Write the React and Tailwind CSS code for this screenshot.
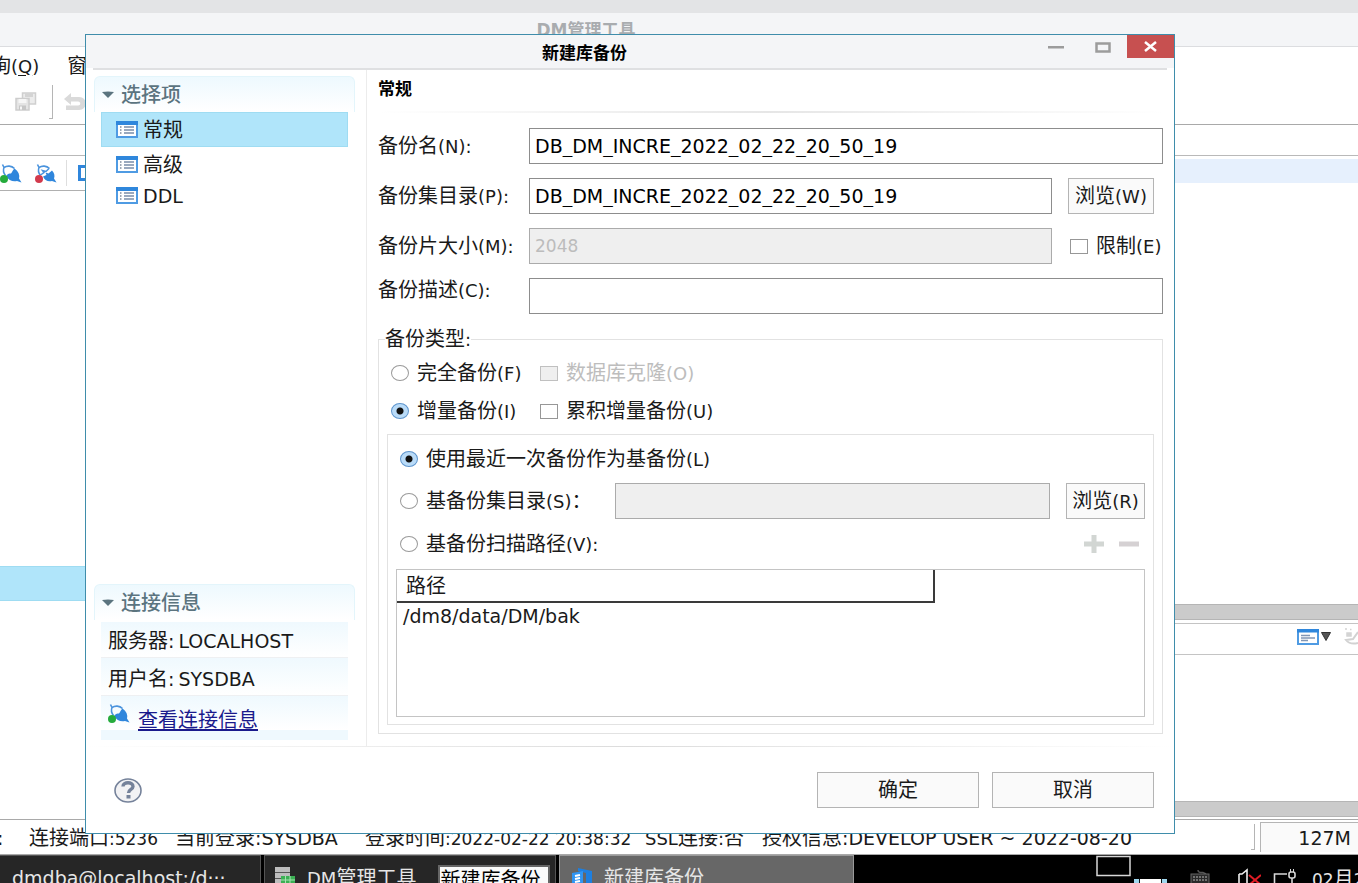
import React from "react";

const CJK = /([\u2e80-\u9fff\uff00-\uffef]+)/;

function Mixed({ children }) {
  return String(children)
    .split(CJK)
    .map((part, i) =>
      CJK.test(part) ? (
        <span key={i} className="text-[20px]">{part}</span>
      ) : (
        part
      )
    );
}

function ListIcon() {
  return (
    <svg width="22" height="17" viewBox="0 0 22 17" className="shrink-0" aria-hidden="true">
      <rect x="1" y="1" width="20" height="15" fill="#fff" stroke="#4f9be3" strokeWidth="2" />
      <rect x="0" y="0" width="22" height="4" fill="#2f87dc" />
      <path d="M4 6h1.500M4 9h1.500M4 12h1.500" stroke="#7d8b9c" strokeWidth="1.300" />
      <path d="M8 6h10M8 9h10M8 12h10" stroke="#9aa9be" strokeWidth="2" />
    </svg>
  );
}

function PlugIcon({ dot, open }) {
  return (
    <svg width="22" height="19" viewBox="0 0 22 19" className="shrink-0" aria-hidden="true">
      <path d="M2.500 0.500 4 3.500M4 3.500C3 6 3.500 9 5.500 11.500M4 3.500C7 1.500 11.500 1.500 14.500 4.500" fill="none" stroke="#4a93dd" strokeWidth="1.600" />
      {open ? (
        <>
          <path d="M5.500 11 9 8.500 7.500 6.500 11 7.500 14 4.500" fill="none" stroke="#4a93dd" strokeWidth="1.500" />
          <path d="M8 12.500 11.500 11 10.500 8.500 13.500 9.500 17 6.500C19.500 9 20 12 19 14.500L21.500 18.500 17 17C13 18 9.500 16.500 8 12.500Z" fill="#2f86dc" />
        </>
      ) : (
        <path d="M6 12C8 9.500 9.500 9.500 11 9.500C12.500 8 12.500 6 14.500 4.500C18.500 7.500 20 11 19 14.500L21.500 18.500 17 17C13 18 8.500 16.500 6 12Z" fill="#2f86dc" />
      )}
      <circle cx="4" cy="15" r="4" fill={dot} />
    </svg>
  );
}

function SectionHeader({ children }) {
  return (
    <h2 className="flex h-[36px] items-center gap-[7px] rounded-t-md border border-b-0 border-[#e3f5fb] bg-linear-to-b from-[#eef9fe] to-white pl-[7px] text-[#5b747f]">
      <svg width="12" height="7" viewBox="0 0 12 7" aria-hidden="true">
        <path d="M0 1Q6 0 12 1L6 7Z" fill="#5b747f" />
      </svg>
      <span className="font-medium"><Mixed>{children}</Mixed></span>
    </h2>
  );
}

function NavItem({ label, active, className }) {
  return (
    <button
      type="button"
      className={`flex w-full items-center gap-[5px] border pl-[14px] text-left ${
        active ? "border-[#9fdcf2] bg-[#b0e5fa]" : "border-transparent"
      } ${className}`}
    >
      <ListIcon />
      <Mixed>{label}</Mixed>
    </button>
  );
}

const field = "h-[36px] min-w-0 border border-[#8d8d8d] bg-white px-[5px] text-[19px] text-black outline-none disabled:border-[#ababab] disabled:bg-[#efefef] disabled:text-[17px] disabled:text-[#bcbcbc]";
const push = "h-[36px] shrink-0 border border-[#b4b4b4] bg-[#fafafa] whitespace-nowrap";

function Check({ label, disabled }) {
  return (
    <label className={`flex h-[24px] items-center gap-2 whitespace-nowrap ${disabled ? "text-[#bdbdbd]" : ""}`}>
      <input
        type="checkbox"
        disabled={disabled}
        className="h-[15px] w-[18px] shrink-0 appearance-none border border-[#979797] bg-white checked:bg-[#4a93dd] disabled:border-[#c0c0c0] disabled:bg-[#efefef]"
      />
      <span><Mixed>{label}</Mixed></span>
    </label>
  );
}

function Radio({ name, label, defaultChecked }) {
  return (
    <label className="flex h-[24px] items-center gap-2 whitespace-nowrap">
      <input
        type="radio"
        name={name}
        defaultChecked={defaultChecked}
        className="h-[16px] w-[18px] shrink-0 appearance-none rounded-[50%] border border-[#9a9a9a] bg-white checked:border-[#5b93cc] checked:bg-[radial-gradient(circle,#111_0_3px,#b9dbf8_4px)]"
      />
      <span><Mixed>{label}</Mixed></span>
    </label>
  );
}

function TitleBar() {
  return (
    <>
      <header className="flex h-[33px] shrink-0 items-start bg-[#f4f5f7]">
        <h1 className="flex-1 pt-[6px] pl-[50px] text-center text-[17px] leading-[24px] font-bold text-black">新建库备份</h1>
        <button type="button" aria-label="最小化" className="flex h-[24px] w-[46px] items-center justify-center">
          <svg width="16" height="3" aria-hidden="true"><rect width="16" height="2.500" fill="#9c9c9c" /></svg>
        </button>
        <button type="button" aria-label="最大化" className="flex h-[24px] w-[48px] items-center justify-center">
          <svg width="16" height="11" aria-hidden="true">
            <rect x="1.500" y="1.500" width="13" height="8" fill="none" stroke="#9c9c9c" strokeWidth="2.500" />
          </svg>
        </button>
        <button type="button" aria-label="关闭" className="flex h-[23px] w-[47px] items-center justify-center bg-[#c75050]">
          <svg width="13" height="11" aria-hidden="true">
            <path d="M1 1 12 10M12 1 1 10" stroke="#fff" strokeWidth="2.500" />
          </svg>
        </button>
      </header>
      <div className="mx-[7px] h-[2px] shrink-0 bg-[#dfe0e2]" />
    </>
  );
}

function Sidebar() {
  return (
    <aside className="flex w-[281px] shrink-0 flex-col border-r border-[#ececec] pt-[6px] pr-[11px] pb-[6px] pl-2">
      <SectionHeader>选择项</SectionHeader>
      <nav className="flex-1 px-[7px]">
        <NavItem label="常规" active className="h-[35px]" />
        <NavItem label="高级" className="h-[35px]" />
        <NavItem label="DDL" className="h-[27px]" />
      </nav>
      <SectionHeader>连接信息</SectionHeader>
      <div className="mt-[2px] px-[7px]">
        <p className="flex h-[36px] items-center border-b border-[#eef0f2] bg-linear-to-b from-[#eff9fe] to-white pt-[2px] pl-[7px] whitespace-pre"><span><Mixed>服务器:</Mixed></span><span className="pl-1">LOCALHOST</span></p>
        <p className="flex h-[38px] items-center border-b border-[#eef0f2] bg-linear-to-b from-[#eff9fe] to-white pt-[4px] pl-[7px] whitespace-pre"><span><Mixed>用户名:</Mixed></span><span className="pl-1">SYSDBA</span></p>
        <p className="flex h-[34px] items-start gap-2 bg-linear-to-b from-[#eff9fe] to-white pt-[8px] pl-[7px]">
          <PlugIcon dot="#25ab3c" />
          <a href="#connection" className="pt-[5px] text-[20px] leading-[22px] text-[#1a1a8c] underline underline-offset-2">查看连接信息</a>
        </p>
        <div className="h-[10px] bg-[#eff9fe]" />
      </div>
    </aside>
  );
}

function BackupForm() {
  return (
    <main className="flex min-w-0 flex-1 flex-col pr-[11px] pb-[12px] pl-[11px] text-[18px]">
      <h2 className="flex h-[41px] items-center pb-[4px] text-[17px] font-bold text-black">常规</h2>
      <div className="h-[2px] shrink-0 bg-linear-to-r from-white via-[#e6e6e6] to-white" />
      <div className="mt-[15px] grid grid-cols-[151px_minmax(0,1fr)_111px] items-center gap-y-[14px]">
        <label htmlFor="name"><Mixed>备份名(N):</Mixed></label>
        <input id="name" className={`${field} col-span-2`} defaultValue="DB_DM_INCRE_2022_02_22_20_50_19" />
        <label htmlFor="dir"><Mixed>备份集目录(P):</Mixed></label>
        <input id="dir" className={field} defaultValue="DB_DM_INCRE_2022_02_22_20_50_19" />
        <button type="button" className={`${push} ml-[16px] w-[86px]`}><Mixed>浏览(W)</Mixed></button>
        <label htmlFor="size"><Mixed>备份片大小(M):</Mixed></label>
        <input id="size" className={field} defaultValue="2048" disabled />
        <div className="ml-[18px]"><Check label="限制(E)" /></div>
        <label htmlFor="desc" className="self-start"><Mixed>备份描述(C):</Mixed></label>
        <input id="desc" className={`${field} col-span-2`} />
      </div>
      <fieldset className="mt-[13px] flex min-w-0 flex-1 flex-col border border-[#e2e2e2] px-[8px] pb-[8px]">
        <legend className="h-[24px] -ml-[2px] leading-[24px]"><Mixed>备份类型:</Mixed></legend>
        <div className="grid grid-cols-[149px_auto] justify-start gap-y-[14px] pt-[10px] pl-1">
          <Radio name="type" label="完全备份(F)" />
          <Check label="数据库克隆(O)" disabled />
          <Radio name="type" label="增量备份(I)" defaultChecked />
          <Check label="累积增量备份(U)" />
        </div>
        <div className="mt-[11px] flex flex-1 flex-col border border-[#e2e2e2] px-[8px] pt-[12px] pb-[7px]">
          <div className="pl-1"><Radio name="base" label="使用最近一次备份作为基备份(L)" defaultChecked /></div>
          <div className="mt-[12px] flex items-center pl-1">
            <div className="w-[215px] shrink-0"><Radio name="base" label="基备份集目录(S)：" /></div>
            <input aria-label="基备份集目录" className={`${field} flex-1`} disabled />
            <button type="button" className={`${push} ml-[16px] w-[79px]`}><Mixed>浏览(R)</Mixed></button>
          </div>
          <div className="mt-[13px] flex items-center justify-between pr-[6px] pl-1">
            <Radio name="base" label="基备份扫描路径(V):" />
            <div className="flex gap-[15px]">
              <button type="button" aria-label="添加">
                <svg width="20" height="18" aria-hidden="true"><path d="M0 9H20M10 0V18" stroke="#d2d6d3" strokeWidth="5" /></svg>
              </button>
              <button type="button" aria-label="移除">
                <svg width="20" height="18" aria-hidden="true"><path d="M0 9H20" stroke="#d5d1d3" strokeWidth="5" /></svg>
              </button>
            </div>
          </div>
          <div className="mt-[13px] flex-1 border border-[#c4c4c4]">
            <table className="w-[72%] border-collapse text-left text-[19px]">
              <thead>
                <tr>
                  <th className="h-[32px] border-r-2 border-b-2 border-[#3a3a3a] pl-[9px] font-normal"><Mixed>路径</Mixed></th>
                </tr>
              </thead>
              <tbody>
                <tr><td className="h-[26px] pl-[6px]">/dm8/data/DM/bak</td></tr>
              </tbody>
            </table>
          </div>
        </div>
      </fieldset>
    </main>
  );
}

function BackupDialog() {
  return (
    <section
      role="dialog"
      aria-label="新建库备份"
      className="absolute top-[34px] right-[183px] bottom-[49px] left-[85px] flex flex-col border border-[#3f8dab] bg-white"
    >
      <TitleBar />
      <div className="flex min-h-0 flex-1">
        <Sidebar />
        <BackupForm />
      </div>
      <div className="h-px shrink-0 bg-linear-to-r from-white via-[#dcdcdc] to-white" />
      <footer className="flex h-[86px] shrink-0 items-center gap-[13px] pr-5 pl-[28px]">
        <button type="button" aria-label="帮助" className="mr-auto">
          <svg width="28" height="25" viewBox="0 0 28 25" aria-hidden="true">
            <ellipse cx="14" cy="12.500" rx="13" ry="11.500" fill="#f2f2f4" stroke="#75829a" strokeWidth="1.600" />
            <path d="M9 8.500C9 3.500 19 3.500 19 8.500C19 11.500 14.500 11.500 14.500 15" fill="none" stroke="#75829a" strokeWidth="3.400" />
            <rect x="12.500" y="17" width="4" height="3.500" fill="#75829a" />
          </svg>
        </button>
        <button type="button" className={`${push} w-[162px]`}><Mixed>确定</Mixed></button>
        <button type="button" className={`${push} w-[162px]`}><Mixed>取消</Mixed></button>
      </footer>
    </section>
  );
}

function SaveAllIcon() {
  return (
    <svg width="22" height="19" viewBox="0 0 22 19" aria-hidden="true">
      <path d="M7.500 1h13v11h-13z" fill="#ececec" stroke="#cfcfcf" strokeWidth="1.500" />
      <rect x="10" y="1" width="8" height="4" fill="#d4d4d4" />
      <path d="M1 6.500h13V18H1z" fill="#e4e4e4" stroke="#cdcdcd" strokeWidth="1.500" />
      <rect x="3.500" y="7" width="8" height="4" fill="#f6f6f6" />
      <rect x="4" y="13.500" width="7" height="4.500" fill="#c6c6c6" />
      <rect x="5" y="14.500" width="2" height="3" fill="#f6f6f6" />
    </svg>
  );
}

function Workbench() {
  return (
    <div className="flex min-h-0 flex-1 flex-col">
      <div className="h-[13px] shrink-0 bg-[#e3e4e6]" />
      <div className="h-[34px] shrink-0 border-b border-[#dcdde0] bg-[#f4f5f7] pt-[4px] pr-[186px] text-center text-[17px] leading-[26px] font-bold text-[#a9acaf]">DM管理工具</div>
      <nav className="flex h-[38px] shrink-0 items-center gap-[28px] text-[18px] whitespace-nowrap">
        <span className="-ml-[9px]"><Mixed>询</Mixed>(<u className="underline-offset-2">Q</u>)</span>
        <span><Mixed>窗口</Mixed></span>
      </nav>
      <div className="flex h-[40px] shrink-0 items-start border-b border-[#a9a9a9] pl-[15px]">
        <div className="pt-[7px]"><SaveAllIcon /></div>
        <div className="ml-[12px] h-[34px] w-[4px] border-r border-b border-[#b5b5b5]" />
        <svg width="24" height="18" viewBox="0 0 24 18" className="mt-[8px] ml-[11px]" aria-hidden="true">
          <path d="M0 6 7 0V4H15C24 4 24 17 15 17H2V12.500H14C17 12.500 17 8.500 14 8.500H7V12Z" fill="#dadada" />
        </svg>
      </div>
      <div className="h-[31px] shrink-0 border-b border-[#b9b9b9]" />
      <div className="flex min-h-0 flex-1">
        <div className="flex w-[300px] shrink-0 flex-col">
          <div className="flex h-[35px] shrink-0 items-center border-b border-[#b0b0b0]">
            <PlugIcon dot="#25ab3c" />
            <div className="w-[13px]" />
            <PlugIcon dot="#d23a4c" open />
            <div className="ml-[9px] h-[26px] w-px bg-[#dedede]" />
            <svg width="16" height="16" viewBox="0 0 16 16" className="ml-[11px]" aria-hidden="true">
              <path d="M1.500 1.500H15V14.500H1.500Z" fill="#fff" stroke="#2f86dc" strokeWidth="3" />
            </svg>
          </div>
          <div className="mt-[375px] h-[35px] shrink-0 border-y border-[#9fdcf2] bg-[#b0e5fa]" />
        </div>
        <div className="flex min-w-0 flex-1 flex-col">
          <div className="mt-[3px] h-[24px] shrink-0 bg-[#e6f0fd]" />
          <div className="flex-1" />
          <div className="h-[16px] shrink-0 border-y border-[#b5b5b5] bg-[#cbcbcb]" />
          <div className="mt-[3px] flex h-[32px] shrink-0 items-center border-y border-[#c4c4c4]">
            <div className="ml-auto flex items-center pb-[5px]">
              <svg width="22" height="16" viewBox="0 0 22 16" aria-hidden="true">
                <rect x="1" y="1" width="20" height="14" fill="#fff" stroke="#4f9be3" strokeWidth="2" />
                <rect width="22" height="3.500" fill="#2f87dc" />
                <path d="M4 6.500h9M4 9h14M4 11.500h7" stroke="#8196b5" strokeWidth="1.300" />
              </svg>
              <svg width="10" height="9" className="ml-[2px]" aria-hidden="true"><path d="M0.500 0.500H9.500L5 8.500Z" fill="#555" stroke="#333" /></svg>
              <svg width="14" height="17" viewBox="0 0 14 17" className="ml-[13px]" aria-hidden="true">
                <path d="M1 1h2M6 1.500h1.500M3 5h4v3H3z" stroke="#d4d4d4" strokeWidth="1.500" fill="#d4d4d4" />
                <path d="M14 4 9 11 2 12Q6 17 14 15" fill="none" stroke="#d2d2d2" strokeWidth="2" />
              </svg>
            </div>
          </div>
          <div className="h-[146px] shrink-0" />
          <div className="h-[16px] shrink-0 border-y border-[#b5b5b5] bg-[#cbcbcb]" />
          <div className="h-[2px] shrink-0" />
        </div>
      </div>
      <div className="flex h-[36px] shrink-0 border-y border-[#a9a9a9] whitespace-pre">
        <div className="flex min-w-0 flex-1 items-center pt-[2px]">
          <span className="w-[29px] shrink-0 -indent-[3px]">:</span>
          <span className="w-[146px] shrink-0 text-[17px]"><Mixed>连接端口:5236</Mixed></span>
          <span className="w-[190px] shrink-0"><Mixed>当前登录:SYSDBA</Mixed></span>
          <span className="w-[280px] shrink-0 text-[17px]"><Mixed>登录时间:2022-02-22 20:38:32</Mixed></span>
          <span className="w-[117px] shrink-0 text-[18px]"><Mixed>SSL连接:否</Mixed></span>
          <span className="shrink-0"><Mixed>授权信息:DEVELOP USER ~ 2022-08-20</Mixed></span>
        </div>
        <div className="mt-[4px] h-[26px] w-[4px] shrink-0 border-r border-b border-[#b5b5b5]" />
        <div className="mt-[2px] ml-[5px] h-[30px] w-[98px] shrink-0 border-t border-l border-[#b5b5b5] bg-[#fafafa] pt-[3px] pr-[7px] text-right">127M</div>
      </div>
    </div>
  );
}

function Taskbar() {
  return (
    <footer className="flex h-[28px] shrink-0 gap-[3px] overflow-hidden bg-black leading-[26px] whitespace-nowrap text-[#e6e6e6]">
      <button type="button" className="flex h-[46px] w-[261px] shrink-0 items-center border border-l-0 border-[#555] bg-[#262626] pl-[12px]">dmdba@localhost:/d···</button>
      <button type="button" className="flex h-[46px] w-[292px] shrink-0 items-center border border-[#555] bg-[#262626] pl-[10px]">
        <svg width="20" height="22" viewBox="0 0 20 22" aria-hidden="true">
          <path d="M0 0h15v5H0zM0 6h15v5H0zM0 12h15v5H0z" fill="#bdbdbd" />
          <path d="M0 5.500h15M0 11.500h15" stroke="#555" />
          <rect x="6" y="9" width="14" height="13" fill="#3cb054" />
          <path d="M6 13h14M10.500 9v13M15 9v13" stroke="#a6e2b1" />
        </svg>
        <span className="ml-[12px] text-[18px]"><Mixed>DM管理工具</Mixed></span>
        <span className="mt-[18px] ml-[22px] h-[44px] w-[112px] border-2 border-[#666] bg-[#fafafa] text-left text-[20px] text-black">新建库备份</span>
      </button>
      <button type="button" className="flex h-[46px] w-[295px] shrink-0 items-center border border-[#9a9a9a] bg-[#676767] pl-[12px]">
        <svg width="20" height="20" viewBox="0 0 20 20" aria-hidden="true">
          <path d="M6 0 20 3V17L14 20V5L6 3Z" fill="#1d7fe0" />
          <path d="M0 5 11 3V20L0 18Z" fill="#2f95f3" />
          <path d="M3 8 8 7M3 11 8 10M3 14 8 13" stroke="#fff" strokeWidth="2" />
        </svg>
        <span className="ml-[12px]"><Mixed>新建库备份</Mixed></span>
      </button>
      <div className="ml-auto flex shrink-0 items-start">
        <svg width="72" height="28" viewBox="0 0 72 28" aria-hidden="true">
          <rect x="1" y="1.500" width="33" height="19" fill="none" stroke="#d8d8d8" strokeWidth="1.500" />
          <rect x="38" y="24" width="33" height="4" fill="#9fd7ee" />
          <rect x="43" y="24" width="23" height="4" fill="#111" />
          <rect x="44" y="24" width="21" height="4" fill="#fff" />
        </svg>
        <svg width="20" height="28" viewBox="0 0 20 28" className="ml-[22px]" aria-hidden="true">
          <path d="M8 15q0 3 5 2.500l3 1.500" fill="none" stroke="#555" strokeWidth="1.500" />
          <rect x="1" y="19" width="18" height="12" fill="#2a2a2a" stroke="#666" />
          <path d="M3 22h14M3 25h14" stroke="#888" strokeWidth="1.500" strokeDasharray="2 1" />
        </svg>
        <svg width="24" height="28" viewBox="0 0 24 28" className="ml-[27px]" aria-hidden="true">
          <path d="M2 19H5L10 15V30M2 19V28" fill="none" stroke="#eee" strokeWidth="1.600" />
          <path d="M12 20 24 30M24 20 12 30" stroke="#e01b24" strokeWidth="2" />
        </svg>
        <svg width="24" height="28" viewBox="0 0 24 28" className="ml-[12px]" aria-hidden="true">
          <path d="M14 19H1.500V28M19 23V28" fill="none" stroke="#d8d8d8" strokeWidth="1.600" />
          <rect x="16" y="17" width="6" height="6" rx="2" fill="none" stroke="#d8d8d8" strokeWidth="1.600" />
          <path d="M17.500 14v3M20.500 14v3" stroke="#d8d8d8" />
        </svg>
        <span className="ml-[15px] w-[46px] overflow-hidden pt-[11px] text-[17px]"><Mixed>02月22</Mixed></span>
      </div>
    </footer>
  );
}

export default function App() {
  return (
    <div className="relative flex h-screen min-h-[883px] w-full flex-col overflow-hidden bg-white font-['DejaVu_Sans','Noto_Sans_CJK_SC',sans-serif] text-[19px] leading-[24px] text-[#1a1a1a]">
      <Workbench />
      <Taskbar />
      <BackupDialog />
    </div>
  );
}
